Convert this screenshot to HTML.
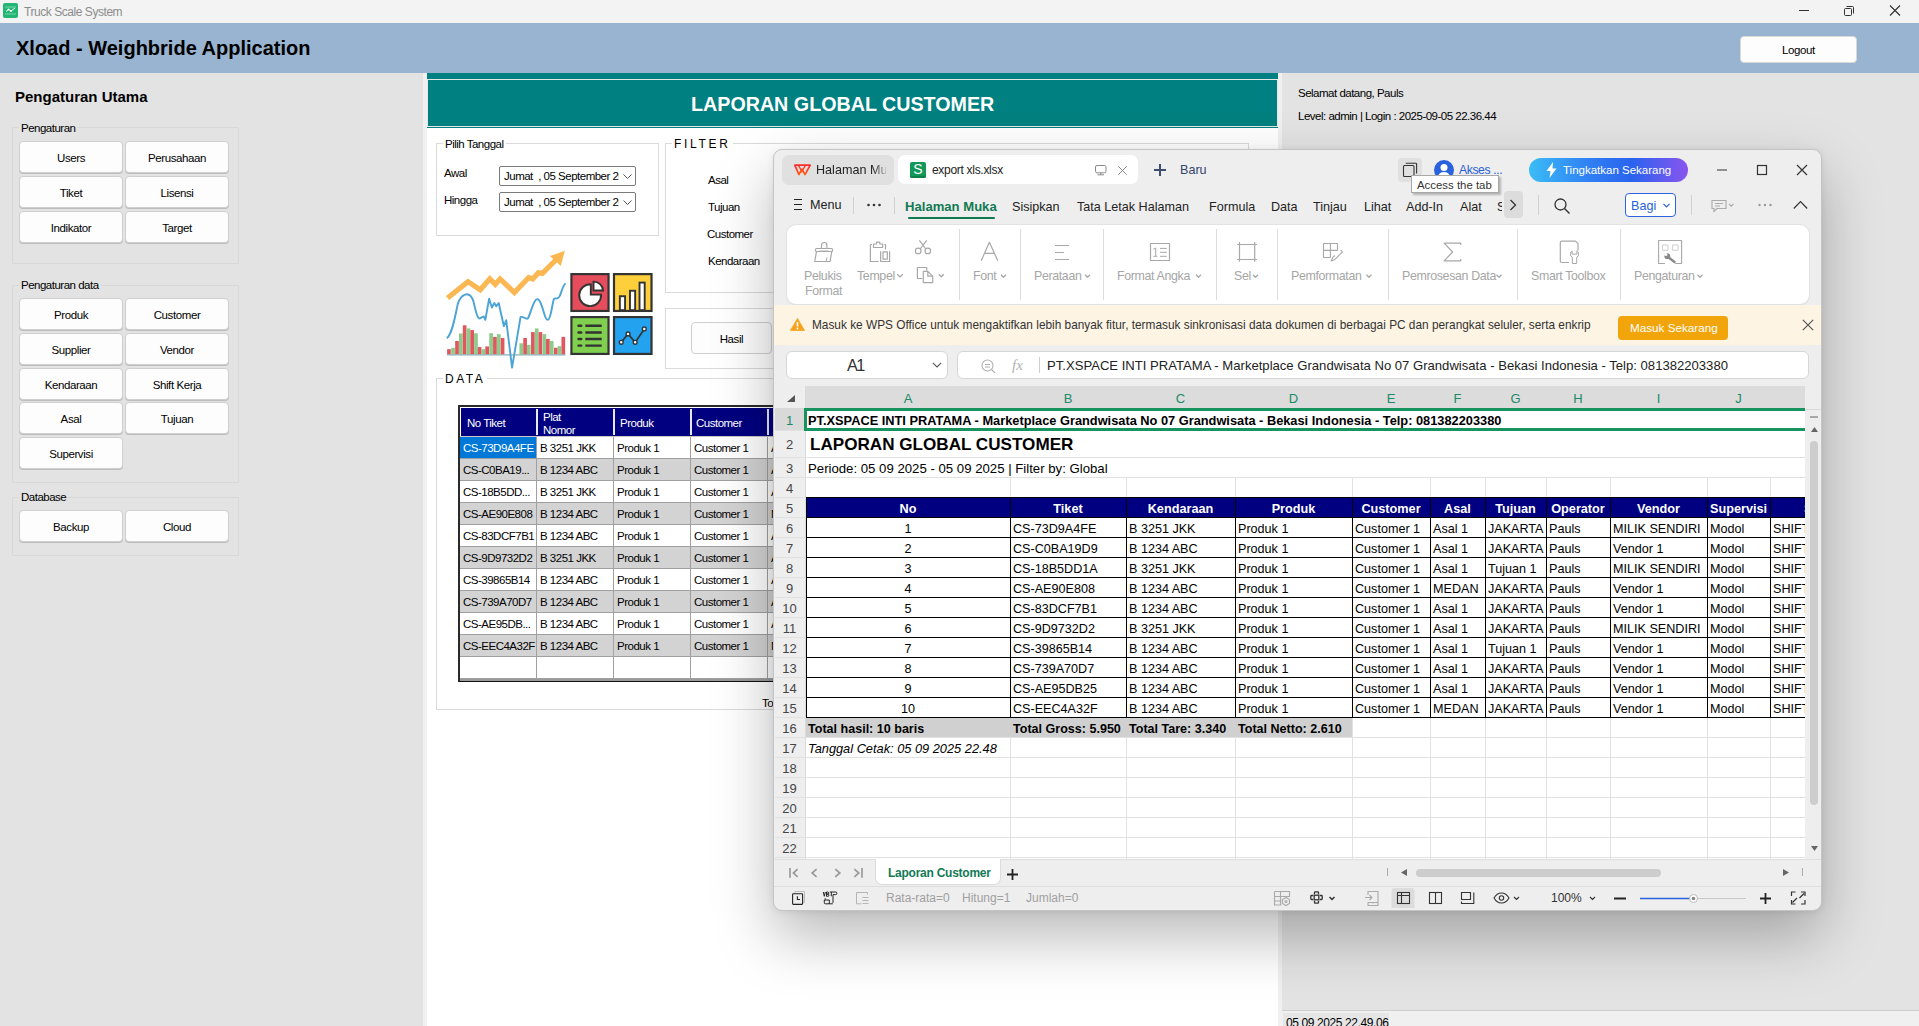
<!DOCTYPE html>
<html><head><meta charset="utf-8">
<style>
*{margin:0;padding:0;box-sizing:border-box}
html,body{width:1919px;height:1026px;overflow:hidden;background:#e3e3e3;font-family:"Liberation Sans",sans-serif;color:#000}
.a{position:absolute}
.t{position:absolute;white-space:nowrap;line-height:1}
.wf{font-size:11.5px;letter-spacing:-0.5px;margin-top:1px}
.btn{position:absolute;background:#fdfdfd;border:1px solid #cfcfcf;border-radius:4px;box-shadow:0 1px 0 #bdbdbd;font-size:11.5px;letter-spacing:-0.4px;text-align:center;line-height:32px}
.grp{position:absolute;border:1px solid #d8d8d8;border-radius:1px}
.grpw{position:absolute;border:1px solid #dadada}
.rb{font-size:12.4px;color:#a6a6a6;letter-spacing:-0.35px}
.xc{font-size:12.6px}
.lbl{position:absolute;white-space:nowrap;line-height:1;font-size:11.5px;letter-spacing:-0.5px;padding:0 2px;margin-top:1px}
</style></head><body>

<!-- Title bar -->
<div class="a" style="left:0;top:0;width:1919px;height:23px;background:#f3f3f3"></div>
<svg class="a" style="left:3px;top:3px" width="15" height="15" viewBox="0 0 15 15"><rect x="0" y="0" width="15" height="15" rx="2" fill="#22b573"/><path d="M3 8.5 L5.5 6.5 L8 8 L12 5" stroke="#fff" stroke-width="1" fill="none"/><path d="M2 4h11M2 11h11" stroke="#8fe0b8" stroke-width="0.8"/><circle cx="5.5" cy="6.5" r="1" fill="#fff"/><circle cx="8" cy="8" r="1" fill="#fff"/></svg>
<div class="t" style="left:24px;top:6px;font-size:12px;letter-spacing:-0.45px;color:#8c8c8c">Truck Scale System</div>
<svg class="a" style="left:1799px;top:5px" width="105" height="14" viewBox="0 0 105 14"><path d="M0 5.5h10" stroke="#333" stroke-width="1"/><rect x="45.5" y="3.5" width="7" height="7" fill="none" stroke="#333" stroke-width="1" rx="1"/><path d="M47.5 1.5h6a1 1 0 0 1 1 1v6" fill="none" stroke="#333" stroke-width="1"/><path d="M91 0.5l10 10M101 0.5l-10 10" stroke="#333" stroke-width="1.1"/></svg>

<!-- Header -->
<div class="a" style="left:0;top:23px;width:1919px;height:50px;background:#99b4d1"></div>
<div class="t" style="left:16px;top:38px;font-size:20px;font-weight:bold">Xload - Weighbride Application</div>
<div class="btn" style="left:1740px;top:36px;width:117px;height:27px;line-height:27px;border-color:#d8d8d8;box-shadow:none">Logout</div>

<!-- Left panel -->
<div class="t" style="left:15px;top:89px;font-size:15px;font-weight:bold">Pengaturan Utama</div>
<div class="grp" style="left:12px;top:127px;width:227px;height:137px"></div>
<div class="lbl" style="left:19px;top:122px;background:#e3e3e3">Pengaturan</div>
<div class="btn" style="left:19px;top:141px;width:104px;height:32px">Users</div>
<div class="btn" style="left:125px;top:141px;width:104px;height:32px">Perusahaan</div>
<div class="btn" style="left:19px;top:176px;width:104px;height:32px">Tiket</div>
<div class="btn" style="left:125px;top:176px;width:104px;height:32px">Lisensi</div>
<div class="btn" style="left:19px;top:211px;width:104px;height:32px">Indikator</div>
<div class="btn" style="left:125px;top:211px;width:104px;height:32px">Target</div>

<div class="grp" style="left:12px;top:285px;width:227px;height:198px"></div>
<div class="lbl" style="left:19px;top:279px;background:#e3e3e3">Pengaturan data</div>
<div class="btn" style="left:19px;top:298px;width:104px;height:32px">Produk</div>
<div class="btn" style="left:125px;top:298px;width:104px;height:32px">Customer</div>
<div class="btn" style="left:19px;top:333px;width:104px;height:32px">Supplier</div>
<div class="btn" style="left:125px;top:333px;width:104px;height:32px">Vendor</div>
<div class="btn" style="left:19px;top:368px;width:104px;height:32px">Kendaraan</div>
<div class="btn" style="left:125px;top:368px;width:104px;height:32px">Shift Kerja</div>
<div class="btn" style="left:19px;top:402px;width:104px;height:32px">Asal</div>
<div class="btn" style="left:125px;top:402px;width:104px;height:32px">Tujuan</div>
<div class="btn" style="left:19px;top:437px;width:104px;height:32px">Supervisi</div>

<div class="grp" style="left:12px;top:497px;width:227px;height:59px"></div>
<div class="lbl" style="left:19px;top:491px;background:#e3e3e3">Database</div>
<div class="btn" style="left:19px;top:510px;width:104px;height:32px">Backup</div>
<div class="btn" style="left:125px;top:510px;width:104px;height:32px">Cloud</div>

<div class="a" style="left:423px;top:73px;width:4px;height:953px;background:#f0f0f0"></div>

<!-- Middle panel -->
<div class="a" style="left:427px;top:73px;width:851px;height:953px;background:#fff"></div>
<div class="a" style="left:427px;top:73px;width:851px;height:55px;background:#008080"></div>
<div class="a" style="left:427px;top:79px;width:851px;height:48px;border:1px solid #e6e6e6;border-right-color:#e6e6e6;background:#008080"></div>
<div class="t" style="left:691px;top:95px;font-size:19.7px;font-weight:bold;color:#fff">LAPORAN GLOBAL CUSTOMER</div>


<!-- Pilih tanggal -->
<div class="grpw" style="left:436px;top:143px;width:223px;height:93px"></div>
<div class="lbl" style="left:443px;top:138px;background:#fff">Pilih Tanggal</div>
<div class="t wf" style="left:444px;top:167px">Awal</div>
<div class="t wf" style="left:444px;top:194px">Hingga</div>
<div class="a" style="left:499px;top:166px;width:137px;height:20px;border:1px solid #7a7a7a;border-radius:2px;background:#fff;overflow:hidden"><div class="t wf" style="left:4px;top:3px;width:115px;overflow:hidden">Jumat&nbsp; , 05 September 2025</div><svg class="a" style="left:123px;top:7px" width="9" height="5" viewBox="0 0 9 5"><path d="M0.5 0.5L4.5 4.5L8.5 0.5" fill="none" stroke="#555" stroke-width="1"/></svg></div>
<div class="a" style="left:499px;top:192px;width:137px;height:20px;border:1px solid #7a7a7a;border-radius:2px;background:#fff;overflow:hidden"><div class="t wf" style="left:4px;top:3px;width:115px;overflow:hidden">Jumat&nbsp; , 05 September 2025</div><svg class="a" style="left:123px;top:7px" width="9" height="5" viewBox="0 0 9 5"><path d="M0.5 0.5L4.5 4.5L8.5 0.5" fill="none" stroke="#555" stroke-width="1"/></svg></div>

<!-- Filter -->
<div class="grpw" style="left:665px;top:143px;width:584px;height:150px"></div>
<div class="lbl" style="left:672px;top:136.5px;background:#fff;font-size:12px;letter-spacing:2.7px">FILTER</div>
<div class="t wf" style="left:708px;top:174px">Asal</div>
<div class="t wf" style="left:708px;top:201px">Tujuan</div>
<div class="t wf" style="left:707px;top:228px">Customer</div>
<div class="t wf" style="left:708px;top:255px">Kendaraan</div>

<div class="grpw" style="left:665px;top:308px;width:584px;height:61px"></div>
<div class="btn" style="left:691px;top:322px;width:81px;height:32px;border-color:#d0d0d0;box-shadow:none">Hasil</div>

<!-- chart illustration -->
<svg class="a" style="left:440px;top:240px" width="220" height="140" viewBox="0 0 1612 1026">
<g stroke="none">
<rect x="52" y="800" width="27" height="40" fill="#e2575f"/>
<rect x="82" y="790" width="27" height="50" fill="#8ccb8a"/>
<rect x="111" y="740" width="27" height="100" fill="#e2575f"/>
<rect x="139" y="685" width="27" height="155" fill="#8ccb8a"/>
<rect x="167" y="625" width="27" height="215" fill="#e2575f"/>
<rect x="195" y="648" width="27" height="192" fill="#8ccb8a"/>
<rect x="222" y="660" width="27" height="180" fill="#e2575f"/>
<rect x="250" y="683" width="27" height="157" fill="#8ccb8a"/>
<rect x="277" y="785" width="27" height="55" fill="#e2575f"/>
<rect x="305" y="800" width="27" height="40" fill="#8ccb8a"/>
<rect x="332" y="780" width="27" height="60" fill="#e2575f"/>
<rect x="361" y="683" width="27" height="157" fill="#8ccb8a"/>
<rect x="389" y="710" width="27" height="130" fill="#e2575f"/>
<rect x="417" y="690" width="27" height="150" fill="#8ccb8a"/>
<rect x="445" y="718" width="27" height="122" fill="#e2575f"/>
<rect x="582" y="757" width="27" height="83" fill="#8ccb8a"/>
<rect x="610" y="718" width="27" height="122" fill="#e2575f"/>
<rect x="637" y="768" width="27" height="72" fill="#8ccb8a"/>
<rect x="667" y="675" width="27" height="165" fill="#e2575f"/>
<rect x="695" y="648" width="27" height="192" fill="#8ccb8a"/>
<rect x="722" y="675" width="27" height="165" fill="#e2575f"/>
<rect x="751" y="690" width="27" height="150" fill="#8ccb8a"/>
<rect x="777" y="725" width="27" height="115" fill="#e2575f"/>
<rect x="805" y="740" width="27" height="100" fill="#8ccb8a"/>
<rect x="835" y="790" width="27" height="50" fill="#e2575f"/>
<rect x="862" y="778" width="27" height="62" fill="#8ccb8a"/>
<rect x="890" y="710" width="27" height="130" fill="#e2575f"/>
</g>
<path d="M50 842H920" stroke="#8eafb9" stroke-width="9"/>
<path d="M50 720 C90 690 110 560 130 470 C150 400 215 360 245 450 C270 560 280 590 300 570 L320 560 L332 585 L360 430 L380 495 L398 462 L412 485 L430 462 L468 632 L485 588 L528 935 L590 565 C610 555 625 585 645 575 C670 520 690 420 720 435 C750 450 765 590 790 585 C815 580 820 470 835 432 C845 420 860 440 875 415 C890 390 895 340 920 318" fill="none" stroke="#4ba3d6" stroke-width="14" stroke-linejoin="round"/>
<path d="M55 425 L205 305 L295 365 L365 285 L405 325 L440 285 L545 385 L650 275 L680 285 L720 240 L750 245 L865 130" fill="none" stroke="#fbb752" stroke-width="38" stroke-linejoin="miter"/>
<path d="M915 78 L805 118 L885 190 Z" fill="#fbb752"/>
<g stroke="#333" stroke-width="16">
<rect x="963" y="250" width="272" height="270" fill="#e54c5c"/>
<rect x="1275" y="250" width="275" height="270" fill="#fdd03b"/>
<rect x="963" y="565" width="272" height="270" fill="#80cf4f"/>
<rect x="1275" y="565" width="275" height="270" fill="#23a2ef"/>
</g>
<g fill="none" stroke="#333" stroke-width="14">
<path d="M1105 325 A80 80 0 1 0 1180 400 L1105 400 Z" fill="#fff"/>
<path d="M1125 305 A70 70 0 0 1 1195 370 L1125 370 Z" fill="#fff"/>
<rect x="1318" y="412" width="38" height="102" fill="#fff"/>
<rect x="1392" y="372" width="38" height="142" fill="#fff"/>
<rect x="1462" y="312" width="38" height="202" fill="#fff"/>
<path d="M1065 628H1185M1065 678H1185M1065 726H1185M1065 774H1185" stroke-width="18"/>
<path d="M1015 628H1035M1015 678H1035M1015 726H1035M1015 774H1035" stroke-width="18" stroke-linecap="round"/>
<path d="M1328 750 L1378 688 L1430 750 L1497 652" stroke-width="12"/>
<circle cx="1328" cy="750" r="14" fill="#fff" stroke-width="10"/>
<circle cx="1378" cy="688" r="14" fill="#fff" stroke-width="10"/>
<circle cx="1430" cy="750" r="14" fill="#fff" stroke-width="10"/>
<circle cx="1497" cy="652" r="14" fill="#fff" stroke-width="10"/>
</g>
</svg>

<!-- DATA -->
<div class="grpw" style="left:436px;top:378px;width:830px;height:332px"></div>
<div class="lbl" style="left:443px;top:371.5px;background:#fff;font-size:12px;letter-spacing:2.5px">DATA</div>
<div class="t wf" style="left:762px;top:697px">To</div>
<!-- DataGridView -->
<div class="a" style="left:458px;top:405px;width:330px;height:277px;background:#fff;border-left:2px solid #2a2a2a;border-top:2px solid #2a2a2a;border-bottom:1px solid #111;overflow:hidden">
<div class="a" style="left:1px;top:1px;width:330px;height:28px;background:#000080"></div>
<div class="a" style="left:0;top:29px;width:330px;height:1px;background:#c8c8c8"></div>
<div class="a" style="left:76px;top:2px;width:2px;height:26px;background:#e8e8f0"></div>
<div class="a" style="left:153px;top:2px;width:2px;height:26px;background:#e8e8f0"></div>
<div class="a" style="left:230px;top:2px;width:2px;height:26px;background:#e8e8f0"></div>
<div class="a" style="left:307px;top:2px;width:2px;height:26px;background:#e8e8f0"></div>
<div class="t wf" style="left:7px;top:10px;color:#fff">No Tiket</div>
<div class="t wf" style="left:83px;top:4px;color:#fff">Plat</div>
<div class="t wf" style="left:83px;top:17px;color:#fff">Nomor</div>
<div class="t wf" style="left:160px;top:10px;color:#fff">Produk</div>
<div class="t wf" style="left:236px;top:10px;color:#fff">Customer</div>
<div class="a" style="left:0;top:30px;width:330px;height:22px;background:#fff;border-bottom:1px solid #a0a0a0"></div>
<div class="a" style="left:0;top:30px;width:76px;height:21px;background:#0078d7"></div>
<div class="t wf" style="left:3px;top:35px;color:#fff">CS-73D9A4FE</div>
<div class="t wf" style="left:80px;top:35px;color:#000">B 3251 JKK</div>
<div class="t wf" style="left:157px;top:35px;color:#000">Produk 1</div>
<div class="t wf" style="left:234px;top:35px;color:#000">Customer 1</div>
<div class="t wf" style="left:311px;top:35px;color:#000">A</div>
<div class="a" style="left:0;top:52px;width:330px;height:22px;background:#d3d3d3;border-bottom:1px solid #a0a0a0"></div>
<div class="t wf" style="left:3px;top:57px;color:#000">CS-C0BA19...</div>
<div class="t wf" style="left:80px;top:57px;color:#000">B 1234 ABC</div>
<div class="t wf" style="left:157px;top:57px;color:#000">Produk 1</div>
<div class="t wf" style="left:234px;top:57px;color:#000">Customer 1</div>
<div class="t wf" style="left:311px;top:57px;color:#000">A</div>
<div class="a" style="left:0;top:74px;width:330px;height:22px;background:#fff;border-bottom:1px solid #a0a0a0"></div>
<div class="t wf" style="left:3px;top:79px;color:#000">CS-18B5DD...</div>
<div class="t wf" style="left:80px;top:79px;color:#000">B 3251 JKK</div>
<div class="t wf" style="left:157px;top:79px;color:#000">Produk 1</div>
<div class="t wf" style="left:234px;top:79px;color:#000">Customer 1</div>
<div class="t wf" style="left:311px;top:79px;color:#000">A</div>
<div class="a" style="left:0;top:96px;width:330px;height:22px;background:#d3d3d3;border-bottom:1px solid #a0a0a0"></div>
<div class="t wf" style="left:3px;top:101px;color:#000">CS-AE90E808</div>
<div class="t wf" style="left:80px;top:101px;color:#000">B 1234 ABC</div>
<div class="t wf" style="left:157px;top:101px;color:#000">Produk 1</div>
<div class="t wf" style="left:234px;top:101px;color:#000">Customer 1</div>
<div class="t wf" style="left:311px;top:101px;color:#000">M</div>
<div class="a" style="left:0;top:118px;width:330px;height:22px;background:#fff;border-bottom:1px solid #a0a0a0"></div>
<div class="t wf" style="left:3px;top:123px;color:#000">CS-83DCF7B1</div>
<div class="t wf" style="left:80px;top:123px;color:#000">B 1234 ABC</div>
<div class="t wf" style="left:157px;top:123px;color:#000">Produk 1</div>
<div class="t wf" style="left:234px;top:123px;color:#000">Customer 1</div>
<div class="t wf" style="left:311px;top:123px;color:#000">A</div>
<div class="a" style="left:0;top:140px;width:330px;height:22px;background:#d3d3d3;border-bottom:1px solid #a0a0a0"></div>
<div class="t wf" style="left:3px;top:145px;color:#000">CS-9D9732D2</div>
<div class="t wf" style="left:80px;top:145px;color:#000">B 3251 JKK</div>
<div class="t wf" style="left:157px;top:145px;color:#000">Produk 1</div>
<div class="t wf" style="left:234px;top:145px;color:#000">Customer 1</div>
<div class="t wf" style="left:311px;top:145px;color:#000">A</div>
<div class="a" style="left:0;top:162px;width:330px;height:22px;background:#fff;border-bottom:1px solid #a0a0a0"></div>
<div class="t wf" style="left:3px;top:167px;color:#000">CS-39865B14</div>
<div class="t wf" style="left:80px;top:167px;color:#000">B 1234 ABC</div>
<div class="t wf" style="left:157px;top:167px;color:#000">Produk 1</div>
<div class="t wf" style="left:234px;top:167px;color:#000">Customer 1</div>
<div class="t wf" style="left:311px;top:167px;color:#000">A</div>
<div class="a" style="left:0;top:184px;width:330px;height:22px;background:#d3d3d3;border-bottom:1px solid #a0a0a0"></div>
<div class="t wf" style="left:3px;top:189px;color:#000">CS-739A70D7</div>
<div class="t wf" style="left:80px;top:189px;color:#000">B 1234 ABC</div>
<div class="t wf" style="left:157px;top:189px;color:#000">Produk 1</div>
<div class="t wf" style="left:234px;top:189px;color:#000">Customer 1</div>
<div class="t wf" style="left:311px;top:189px;color:#000">A</div>
<div class="a" style="left:0;top:206px;width:330px;height:22px;background:#fff;border-bottom:1px solid #a0a0a0"></div>
<div class="t wf" style="left:3px;top:211px;color:#000">CS-AE95DB...</div>
<div class="t wf" style="left:80px;top:211px;color:#000">B 1234 ABC</div>
<div class="t wf" style="left:157px;top:211px;color:#000">Produk 1</div>
<div class="t wf" style="left:234px;top:211px;color:#000">Customer 1</div>
<div class="t wf" style="left:311px;top:211px;color:#000">A</div>
<div class="a" style="left:0;top:228px;width:330px;height:22px;background:#d3d3d3;border-bottom:1px solid #a0a0a0"></div>
<div class="t wf" style="left:3px;top:233px;color:#000">CS-EEC4A32F</div>
<div class="t wf" style="left:80px;top:233px;color:#000">B 1234 ABC</div>
<div class="t wf" style="left:157px;top:233px;color:#000">Produk 1</div>
<div class="t wf" style="left:234px;top:233px;color:#000">Customer 1</div>
<div class="t wf" style="left:311px;top:233px;color:#000">M</div>
<div class="a" style="left:0;top:250px;width:330px;height:22px;background:#fff;border-bottom:1px solid #a0a0a0"></div>
<div class="a" style="left:0;top:272px;width:330px;height:2px;background:#9a9a9a"></div>
<div class="a" style="left:76px;top:30px;width:1px;height:241px;background:#a0a0a0"></div>
<div class="a" style="left:153px;top:30px;width:1px;height:241px;background:#a0a0a0"></div>
<div class="a" style="left:230px;top:30px;width:1px;height:241px;background:#a0a0a0"></div>
<div class="a" style="left:307px;top:30px;width:1px;height:241px;background:#a0a0a0"></div>
</div>

<div class="a" style="left:1278px;top:73px;width:4px;height:953px;background:#f0f0f0"></div>

<!-- Right panel -->
<div class="t wf" style="left:1298px;top:87px">Selamat datang, Pauls</div>
<div class="t wf" style="left:1298px;top:110px">Level: admin | Login : 2025-09-05 22.36.44</div>
<div class="a" style="left:1282px;top:1010px;width:637px;height:16px;background:#f0f0f0;border-top:1px solid #cfcfcf"></div>
<div class="a" style="left:1283px;top:1013px;width:106px;height:13px;background:#e6e6e6"></div>
<div class="t" style="left:1286px;top:1017px;font-size:12px;letter-spacing:-0.4px">05 09 2025 22.49.06</div>


<!-- ============ WPS WINDOW ============ -->
<div id="wps" class="a" style="left:773px;top:149px;width:1049px;height:762px;background:#eeeeee;border:1px solid #c4c4c4;border-radius:9px;box-shadow:0 26px 60px rgba(0,0,0,0.28),0 1px 7px rgba(0,0,0,0.08);overflow:hidden">
<div class="a" style="left:-774px;top:-150px;width:1919px;height:1026px">
<!-- inner coordinates = page coordinates -->

<!-- tabs -->
<div class="a" style="left:782px;top:155px;width:112px;height:30px;background:#e0e0e0;border-radius:7px"></div>
<svg class="a" style="left:793px;top:163px" width="18" height="13" viewBox="793 163 18 13"><defs><linearGradient id="wg" x1="0" y1="0" x2="0" y2="1"><stop offset="0" stop-color="#ff2a2a"/><stop offset="1" stop-color="#ff5a10"/></linearGradient></defs><path d="M794.8 165.2H810.2L805 174.6 801.9 169.2 798.9 174.6Z" fill="none" stroke="url(#wg)" stroke-width="1.7" stroke-linejoin="round"/><path d="M798.5 165.5L801.9 171.5 805.3 165.5" fill="none" stroke="url(#wg)" stroke-width="1.4"/></svg>
<div class="t" style="left:816px;top:164px;font-size:12.6px;color:#222;-webkit-mask-image:linear-gradient(90deg,#000 80%,rgba(0,0,0,0.25));width:70px;overflow:hidden">Halaman Muka</div>

<div class="a" style="left:898px;top:155px;width:240px;height:29px;background:#fff;border-radius:7px"></div>
<div class="a" style="left:910px;top:162px;width:16px;height:16px;background:#13985a;border-radius:2px;color:#fff;font-size:14px;line-height:15px;text-align:center;box-shadow:inset 0 -2px 0 #0e8049">S</div>
<div class="t" style="left:932px;top:164px;font-size:12px;letter-spacing:-0.3px;color:#222">export xls.xlsx</div>
<svg class="a" style="left:1095px;top:165px" width="12" height="11" viewBox="0 0 12 11"><rect x="0.5" y="0.5" width="10.5" height="7.3" rx="1.5" fill="none" stroke="#8a8a8a" stroke-width="1"/><path d="M2.5 9.8h6.5M5.75 8v1.8" stroke="#8a8a8a" stroke-width="1"/></svg>
<svg class="a" style="left:1117.5px;top:165.5px" width="9" height="9" viewBox="0 0 9 9"><path d="M0.3 0.3l8.4 8.4M8.7 0.3l-8.4 8.4" stroke="#8a8a8a" stroke-width="1"/></svg>
<svg class="a" style="left:1154px;top:164px" width="12" height="12" viewBox="0 0 12 12"><path d="M6 0v12M0 6h12" stroke="#3d4b6e" stroke-width="2"/></svg>
<div class="t" style="left:1180px;top:164px;font-size:12.6px;color:#34436a">Baru</div>

<div class="a" style="left:1398px;top:158px;width:24px;height:24px;background:#e0e0e0;border-radius:4px"></div>
<svg class="a" style="left:1402px;top:162px" width="16" height="16" viewBox="0 0 16 16"><rect x="1.5" y="3.5" width="10.5" height="11" rx="1" fill="none" stroke="#333" stroke-width="1.1"/><path d="M3.8 1.2h10a0.8 0.8 0 0 1 0.8 0.8v9.5" fill="none" stroke="#333" stroke-width="1.1"/></svg>
<svg class="a" style="left:1434px;top:160px" width="20" height="20" viewBox="0 0 20 20"><circle cx="10" cy="10" r="10" fill="#2a62de"/><circle cx="10" cy="7.5" r="3.5" fill="#fff"/><path d="M3.8 16.5c1-3.2 3.4-4.6 6.2-4.6s5.2 1.4 6.2 4.6" fill="#fff"/></svg>
<div class="t" style="left:1459px;top:164px;font-size:12.2px;letter-spacing:-0.4px;color:#2a5fd6">Akses ...</div>

<div class="a" style="left:1529px;top:158px;width:159px;height:24px;border-radius:12px;background:linear-gradient(90deg,#3bbcf7 0%,#2f7df3 40%,#2a63ee 65%,#8a55ef 100%)"></div>
<svg class="a" style="left:1546px;top:162px" width="11" height="16" viewBox="0 0 11 16"><path d="M7 0L0.5 9h4L3.5 16 10.5 6.5h-4Z" fill="#fff"/></svg>
<div class="t" style="left:1563px;top:165px;font-size:11.5px;color:#fff">Tingkatkan Sekarang</div>

<svg class="a" style="left:1716px;top:164px" width="92" height="12" viewBox="0 0 92 12"><path d="M1 6h10" stroke="#333" stroke-width="1.2"/><rect x="41.5" y="1.5" width="9" height="9" fill="none" stroke="#333" stroke-width="1.2"/><path d="M81 1l10 10M91 1l-10 10" stroke="#333" stroke-width="1.2"/></svg>

<!-- menu row -->
<svg class="a" style="left:794px;top:199px" width="9" height="12" viewBox="0 0 9 12"><path d="M0 0.5h8M0 5.5h8M0 10.5h8" stroke="#222" stroke-width="1"/></svg>
<div class="t" style="left:810px;top:199px;font-size:12.6px;color:#222">Menu</div>
<div class="a" style="left:853px;top:197px;width:1px;height:17px;background:#d0d0d0"></div>
<svg class="a" style="left:867px;top:203px" width="14" height="4" viewBox="0 0 14 4"><circle cx="1.5" cy="2" r="1.3" fill="#333"/><circle cx="7" cy="2" r="1.3" fill="#333"/><circle cx="12.5" cy="2" r="1.3" fill="#333"/></svg>
<div class="a" style="left:894px;top:197px;width:1px;height:17px;background:#d0d0d0"></div>
<div class="t" style="left:905px;top:200px;font-size:13.1px;font-weight:bold;color:#117a52">Halaman Muka</div>
<div class="a" style="left:908px;top:217px;width:87px;height:2px;background:#117a52;border-radius:1px"></div>
<div class="t" style="left:1012px;top:201px;font-size:12.6px;color:#222">Sisipkan</div>
<div class="t" style="left:1077px;top:201px;font-size:12.6px;color:#222">Tata Letak Halaman</div>
<div class="t" style="left:1209px;top:201px;font-size:12.6px;color:#222">Formula</div>
<div class="t" style="left:1271px;top:201px;font-size:12.6px;color:#222">Data</div>
<div class="t" style="left:1313px;top:201px;font-size:12.6px;color:#222">Tinjau</div>
<div class="t" style="left:1364px;top:201px;font-size:12.6px;color:#222">Lihat</div>
<div class="t" style="left:1406px;top:201px;font-size:12.6px;color:#222">Add-In</div>
<div class="t" style="left:1460px;top:201px;font-size:12.6px;color:#222">Alat</div>
<div class="t" style="left:1497px;top:201px;font-size:12.6px;color:#222;width:5px;overflow:hidden">S</div>
<div class="a" style="left:1504px;top:191px;width:19px;height:27px;background:#dcdcdc;border-radius:4px"></div>
<svg class="a" style="left:1509px;top:199px" width="8" height="12" viewBox="0 0 8 12"><path d="M1.5 1l5 5-5 5" fill="none" stroke="#333" stroke-width="1.3"/></svg>
<div class="a" style="left:1538px;top:195px;width:1px;height:20px;background:#d0d0d0"></div>
<svg class="a" style="left:1554px;top:198px" width="17" height="16" viewBox="0 0 17 16"><circle cx="6.5" cy="6.5" r="5.5" fill="none" stroke="#333" stroke-width="1.3"/><path d="M10.5 10.5l5 5" stroke="#333" stroke-width="1.4"/></svg>
<div class="a" style="left:1625px;top:193px;width:51px;height:24px;border:1px solid #2a64e0;border-radius:4px;background:#fff"></div>
<div class="t" style="left:1631px;top:200px;font-size:12.6px;color:#2a5fd6">Bagi</div>
<svg class="a" style="left:1663px;top:203px" width="7" height="5" viewBox="0 0 7 5"><path d="M0.5 0.8l3 3 3-3" fill="none" stroke="#2a5fd6" stroke-width="1.2"/></svg>
<div class="a" style="left:1691px;top:195px;width:1px;height:20px;background:#d0d0d0"></div>
<svg class="a" style="left:1711px;top:199px" width="24" height="14" viewBox="0 0 24 14"><path d="M1 1.5h14v8H6l-3 3v-3H1Z" fill="none" stroke="#aaa" stroke-width="1.1"/><path d="M4 4.5h8M4 7h5" stroke="#aaa" stroke-width="1"/><path d="M18 5l2.2 2.2L22.4 5" fill="none" stroke="#aaa" stroke-width="1.1"/></svg>
<svg class="a" style="left:1758px;top:203px" width="14" height="4" viewBox="0 0 14 4"><circle cx="1.5" cy="2" r="1.2" fill="#999"/><circle cx="7" cy="2" r="1.2" fill="#999"/><circle cx="12.5" cy="2" r="1.2" fill="#999"/></svg>
<svg class="a" style="left:1793px;top:200px" width="15" height="10" viewBox="0 0 15 10"><path d="M0.8 8.5l6.7-7 6.7 7" fill="none" stroke="#333" stroke-width="1.2"/></svg>

<!-- tooltip -->
<div class="a" style="left:1411px;top:175px;width:88px;height:18px;background:#fff;border:1px solid #a8a8a8;box-shadow:2px 2px 2px rgba(0,0,0,0.25)"></div>
<div class="t" style="left:1417px;top:180px;font-size:11.4px;color:#333">Access the tab</div>


<!-- ribbon -->
<div class="a" style="left:787px;top:225px;width:1022px;height:79px;background:#fff;border-radius:9px;box-shadow:0 0 0 1px #e2e2e2,0 1px 2px rgba(0,0,0,0.10)"></div>
<g></g>
<svg class="a" style="left:787px;top:225px" width="1022" height="79" viewBox="787 225 1022 79" fill="none" stroke="#a8a8a8" stroke-width="1.2" stroke-linejoin="round">
 <!-- brush -->
 <path d="M821.5 248.5v-3.3a2.7 2.7 0 0 1 5.4 0v3.3"/>
 <rect x="815.5" y="248.5" width="17" height="3" rx="1"/>
 <path d="M819.5 251h9" stroke-width="0.9"/>
 <path d="M816.5 251.5l-1.8 10h15.3l1.8-10"/>
 <path d="M827 257.5l-1 4" stroke-width="1"/>
 <!-- paste -->
 <path d="M872 244.5h-1.6v17h8.3M884.3 244.5h1.2v5"/>
 <path d="M873.5 247.5v-3.5h3v-1.8h3.3v1.8h2.8v3.5Z"/>
 <path d="M880.6 251.3v10.2h9v-10.2M883 251.8v7.4h4.3v-7.4Z"/>
 <!-- scissors -->
 <circle cx="918.2" cy="250.9" r="2.8"/><circle cx="927.8" cy="250.9" r="2.8"/>
 <path d="M919.4 240.3L925.8 249M926.7 240.3L920.2 249"/>
 <!-- copy -->
 <path d="M926.7 270.8v-3.3h-9.3v11h5"/>
 <path d="M923.3 271.3h4.5l4.9 4.9v6.4h-9.4Z M927.8 271.3v4.9h4.9"/>
 <path d="M938.8 274.3l2.5 2.5 2.5-2.5" stroke-width="1.3"/>
 <path d="M897.2 274.3l2.8 2.6 2.8-2.6" stroke-width="1.3"/>
 <!-- separators -->
 <path d="M959.5 229v71M1020.5 229v71M1103.5 229v71M1216.5 229v71M1277.5 229v71M1388.5 229v71M1517.5 229v71M1620.5 229v71" stroke="#dcdcdc" stroke-width="1"/>
 <!-- A -->
 <path d="M981.2 260.7L989.4 242.3 997.8 260.7M984.6 253.3h9.8"/>
 <!-- align -->
 <path d="M1055 245.5h14M1055 252.5h9M1055 259.5h14" stroke-width="1.1"/>
 <!-- format angka -->
 <rect x="1150.5" y="243.5" width="19" height="17"/><path d="M1153.3 249.3l2.4-1.3v8.3M1153.3 256.3h4M1160 248.4h6.8M1160 252.3h6.8M1160 256.3h6.8" stroke-width="1"/>
 <!-- sel -->
 <path d="M1237.2 244.5h19.7M1237.2 259.5h19.7M1239.5 242.1v19.7M1254.7 242.1v19.7"/>
 <!-- pemformatan -->
 <path d="M1330.5 257.5h-7v-14h14v7 M1323.5 250.4h14 M1330.4 243.5v14" stroke-width="1.1"/>
 <path d="M1342.5 251.8l-7.6 7.6M1340.6 250l1.9 1.9M1334.9 259.4l-3.8 1.6 1.8-3.6 1.9-1.9" stroke-width="1.1"/>
 <!-- sigma -->
 <path d="M1460.7 245v-1.8h-16.5l8.4 8.8-8.4 8.8h16.5v-1.8"/>
 <!-- smart toolbox -->
 <path d="M1569 262.5h-7.2a1.5 1.5 0 0 1-1.5-1.5v-18.4a1.5 1.5 0 0 1 1.5-1.5h13.7l2.5 2.5v6.8"/>
 <path d="M1572.3 263.5v-6.3l-1.6-1.3v-3.8l1.4-1.2v3.2h4.8v-3.2l1.4 1.2v3.8l-1.6 1.3v6.3Z" stroke-width="1"/>
 <!-- pengaturan -->
 <path d="M1665 263.5h-6.4v-23h23v23h-6.4" stroke-width="1.1"/>
 <rect x="1662.6" y="245" width="5.4" height="5.3" stroke="#cfcfcf" stroke-width="1"/><rect x="1672.6" y="245" width="5.4" height="5.3" stroke="#cfcfcf" stroke-width="1"/>
 <path d="M1668 257l6.5 5" stroke="#8a8a8a" stroke-width="2.4" stroke-linecap="round"/><circle cx="1667.3" cy="256.2" r="2.9" fill="#8a8a8a" stroke="none"/><circle cx="1665.9" cy="254.6" r="1.5" fill="#fff" stroke="none"/>
 <!-- chevrons -->
 <path d="M1001 274.8l2.5 2.5 2.5-2.5M1085 274.8l2.5 2.5 2.5-2.5M1196 274.8l2.5 2.5 2.5-2.5M1253 274.8l2.5 2.5 2.5-2.5M1366.5 274.8l2.5 2.5 2.5-2.5M1496.5 274.8l2.5 2.5 2.5-2.5M1697.5 274.8l2.5 2.5 2.5-2.5" stroke-width="1.3"/>
</svg>
<div class="t rb" style="left:804px;top:269.5px">Pelukis</div>
<div class="t rb" style="left:805px;top:284.5px">Format</div>
<div class="t rb" style="left:857px;top:269.5px">Tempel</div>
<div class="t rb" style="left:973px;top:269.5px">Font</div>
<div class="t rb" style="left:1034px;top:269.5px">Perataan</div>
<div class="t rb" style="left:1117px;top:269.5px">Format Angka</div>
<div class="t rb" style="left:1234px;top:269.5px">Sel</div>
<div class="t rb" style="left:1291px;top:269.5px">Pemformatan</div>
<div class="t rb" style="left:1402px;top:269.5px">Pemrosesan Data</div>
<div class="t rb" style="left:1531px;top:269.5px">Smart Toolbox</div>
<div class="t rb" style="left:1634px;top:269.5px">Pengaturan</div>

<!-- warning bar -->
<div class="a" style="left:774px;top:305px;width:1048px;height:40px;background:#fdf4e4"></div>
<svg class="a" style="left:790px;top:318px" width="15" height="13" viewBox="0 0 15 13"><path d="M7.5 0.3L14.8 12.8H0.2Z" fill="#f6a21d" stroke="#f6a21d" stroke-width="0.6" stroke-linejoin="round"/><path d="M7.5 4v4.5" stroke="#fff" stroke-width="1.6"/><circle cx="7.5" cy="10.5" r="0.9" fill="#fff"/></svg>
<div class="t" style="left:812px;top:320px;font-size:11.85px;color:#333">Masuk ke WPS Office untuk mengaktifkan lebih banyak fitur, termasuk sinkronisasi data dokumen di berbagai PC dan perangkat seluler, serta enkrip</div>
<div class="a" style="left:1618px;top:316px;width:110px;height:24px;background:#f2a50b;border-radius:4px"></div>
<div class="t" style="left:1630px;top:322px;font-size:11.7px;color:#fff">Masuk Sekarang</div>
<svg class="a" style="left:1802px;top:319px" width="12" height="12" viewBox="0 0 12 12"><path d="M0.8 0.8l10.4 10.4M11.2 0.8L0.8 11.2" stroke="#555" stroke-width="1.2"/></svg>

<!-- formula bar -->
<div class="a" style="left:786px;top:351px;width:162px;height:28px;background:#fff;border:1px solid #d6d6d6;border-radius:6px"></div>
<div class="t" style="left:847px;top:357px;font-size:16.3px;color:#333;letter-spacing:-1.6px">A1</div>
<svg class="a" style="left:932px;top:362px" width="10" height="6" viewBox="0 0 10 6"><path d="M0.8 0.8l4.2 4.2 4.2-4.2" fill="none" stroke="#555" stroke-width="1.1"/></svg>
<div class="a" style="left:957px;top:351px;width:852px;height:28px;background:#fff;border:1px solid #d6d6d6;border-radius:6px"></div>
<svg class="a" style="left:981px;top:359px" width="16" height="14" viewBox="0 0 16 14"><circle cx="6.5" cy="6.5" r="5.5" fill="none" stroke="#b0b0b0" stroke-width="1.1"/><path d="M4 5.5h5M4 8h5M10.5 10.5l3.5 3.5" stroke="#b0b0b0" stroke-width="1.1"/></svg>
<div class="t" style="left:1012px;top:358px;font-family:'Liberation Serif',serif;font-style:italic;font-size:15px;color:#b0b0b0">fx</div>
<div class="a" style="left:1039px;top:357px;width:1px;height:16px;background:#cfcfcf"></div>
<div class="t" style="left:1047px;top:359px;font-size:13.1px;color:#222">PT.XSPACE INTI PRATAMA - Marketplace Grandwisata No 07 Grandwisata - Bekasi Indonesia - Telp: 081382203380</div>

<!-- sheet -->
<div class="a" style="left:775px;top:386px;width:1030px;height:474px;background:#fff;overflow:hidden">
<div class="a" style="left:-775px;top:-386px;width:1919px;height:1026px">
<div class="a" style="left:775px;top:386px;width:31px;height:474px;background:#eeeeee"></div>
<div class="a" style="left:775px;top:408px;width:31px;height:22px;background:#d9d9d9"></div>
<div class="a" style="left:805px;top:386px;width:1px;height:474px;background:#dadada"></div>
<div class="a" style="left:806px;top:386px;width:1000px;height:22px;background:#dcdcdc"></div>
<svg class="a" style="left:787px;top:395px" width="8" height="7" viewBox="0 0 8 7"><path d="M8 0V7H0Z" fill="#555"/></svg>
<div class="t" style="left:888.0px;width:40px;text-align:center;top:392px;font-size:13px;color:#1a8a68">A</div>
<div class="t" style="left:1048.0px;width:40px;text-align:center;top:392px;font-size:13px;color:#1a8a68">B</div>
<div class="t" style="left:1160.5px;width:40px;text-align:center;top:392px;font-size:13px;color:#1a8a68">C</div>
<div class="t" style="left:1273.5px;width:40px;text-align:center;top:392px;font-size:13px;color:#1a8a68">D</div>
<div class="t" style="left:1371.0px;width:40px;text-align:center;top:392px;font-size:13px;color:#1a8a68">E</div>
<div class="t" style="left:1437.5px;width:40px;text-align:center;top:392px;font-size:13px;color:#1a8a68">F</div>
<div class="t" style="left:1495.5px;width:40px;text-align:center;top:392px;font-size:13px;color:#1a8a68">G</div>
<div class="t" style="left:1558.0px;width:40px;text-align:center;top:392px;font-size:13px;color:#1a8a68">H</div>
<div class="t" style="left:1638.5px;width:40px;text-align:center;top:392px;font-size:13px;color:#1a8a68">I</div>
<div class="t" style="left:1718.5px;width:40px;text-align:center;top:392px;font-size:13px;color:#1a8a68">J</div>
<div class="t" style="left:1805.0px;width:40px;text-align:center;top:392px;font-size:13px;color:#1a8a68">K</div>
<div class="a" style="left:1010px;top:477px;width:1px;height:383px;background:#e1e1e1"></div>
<div class="a" style="left:1126px;top:477px;width:1px;height:383px;background:#e1e1e1"></div>
<div class="a" style="left:1235px;top:477px;width:1px;height:383px;background:#e1e1e1"></div>
<div class="a" style="left:1352px;top:477px;width:1px;height:383px;background:#e1e1e1"></div>
<div class="a" style="left:1430px;top:477px;width:1px;height:383px;background:#e1e1e1"></div>
<div class="a" style="left:1485px;top:477px;width:1px;height:383px;background:#e1e1e1"></div>
<div class="a" style="left:1546px;top:477px;width:1px;height:383px;background:#e1e1e1"></div>
<div class="a" style="left:1610px;top:477px;width:1px;height:383px;background:#e1e1e1"></div>
<div class="a" style="left:1707px;top:477px;width:1px;height:383px;background:#e1e1e1"></div>
<div class="a" style="left:1770px;top:477px;width:1px;height:383px;background:#e1e1e1"></div>
<div class="a" style="left:1880px;top:477px;width:1px;height:383px;background:#e1e1e1"></div>
<div class="a" style="left:775px;top:430px;width:1030px;height:1px;background:#e1e1e1"></div>
<div class="a" style="left:775px;top:457px;width:1030px;height:1px;background:#e1e1e1"></div>
<div class="a" style="left:775px;top:477px;width:1030px;height:1px;background:#e1e1e1"></div>
<div class="a" style="left:775px;top:497px;width:1030px;height:1px;background:#e1e1e1"></div>
<div class="a" style="left:775px;top:517px;width:1030px;height:1px;background:#e1e1e1"></div>
<div class="a" style="left:775px;top:537px;width:1030px;height:1px;background:#e1e1e1"></div>
<div class="a" style="left:775px;top:557px;width:1030px;height:1px;background:#e1e1e1"></div>
<div class="a" style="left:775px;top:577px;width:1030px;height:1px;background:#e1e1e1"></div>
<div class="a" style="left:775px;top:597px;width:1030px;height:1px;background:#e1e1e1"></div>
<div class="a" style="left:775px;top:617px;width:1030px;height:1px;background:#e1e1e1"></div>
<div class="a" style="left:775px;top:637px;width:1030px;height:1px;background:#e1e1e1"></div>
<div class="a" style="left:775px;top:657px;width:1030px;height:1px;background:#e1e1e1"></div>
<div class="a" style="left:775px;top:677px;width:1030px;height:1px;background:#e1e1e1"></div>
<div class="a" style="left:775px;top:697px;width:1030px;height:1px;background:#e1e1e1"></div>
<div class="a" style="left:775px;top:717px;width:1030px;height:1px;background:#e1e1e1"></div>
<div class="a" style="left:775px;top:737px;width:1030px;height:1px;background:#e1e1e1"></div>
<div class="a" style="left:775px;top:757px;width:1030px;height:1px;background:#e1e1e1"></div>
<div class="a" style="left:775px;top:777px;width:1030px;height:1px;background:#e1e1e1"></div>
<div class="a" style="left:775px;top:797px;width:1030px;height:1px;background:#e1e1e1"></div>
<div class="a" style="left:775px;top:817px;width:1030px;height:1px;background:#e1e1e1"></div>
<div class="a" style="left:775px;top:837px;width:1030px;height:1px;background:#e1e1e1"></div>
<div class="a" style="left:775px;top:857px;width:1030px;height:1px;background:#e1e1e1"></div>
<div class="t" style="left:774px;width:31px;text-align:center;top:413.5px;font-size:13px;color:#1a8a68">1</div>
<div class="t" style="left:774px;width:31px;text-align:center;top:438.0px;font-size:13px;color:#444">2</div>
<div class="t" style="left:774px;width:31px;text-align:center;top:461.5px;font-size:13px;color:#444">3</div>
<div class="t" style="left:774px;width:31px;text-align:center;top:481.5px;font-size:13px;color:#444">4</div>
<div class="t" style="left:774px;width:31px;text-align:center;top:501.5px;font-size:13px;color:#444">5</div>
<div class="t" style="left:774px;width:31px;text-align:center;top:521.5px;font-size:13px;color:#444">6</div>
<div class="t" style="left:774px;width:31px;text-align:center;top:541.5px;font-size:13px;color:#444">7</div>
<div class="t" style="left:774px;width:31px;text-align:center;top:561.5px;font-size:13px;color:#444">8</div>
<div class="t" style="left:774px;width:31px;text-align:center;top:581.5px;font-size:13px;color:#444">9</div>
<div class="t" style="left:774px;width:31px;text-align:center;top:601.5px;font-size:13px;color:#444">10</div>
<div class="t" style="left:774px;width:31px;text-align:center;top:621.5px;font-size:13px;color:#444">11</div>
<div class="t" style="left:774px;width:31px;text-align:center;top:641.5px;font-size:13px;color:#444">12</div>
<div class="t" style="left:774px;width:31px;text-align:center;top:661.5px;font-size:13px;color:#444">13</div>
<div class="t" style="left:774px;width:31px;text-align:center;top:681.5px;font-size:13px;color:#444">14</div>
<div class="t" style="left:774px;width:31px;text-align:center;top:701.5px;font-size:13px;color:#444">15</div>
<div class="t" style="left:774px;width:31px;text-align:center;top:721.5px;font-size:13px;color:#444">16</div>
<div class="t" style="left:774px;width:31px;text-align:center;top:741.5px;font-size:13px;color:#444">17</div>
<div class="t" style="left:774px;width:31px;text-align:center;top:761.5px;font-size:13px;color:#444">18</div>
<div class="t" style="left:774px;width:31px;text-align:center;top:781.5px;font-size:13px;color:#444">19</div>
<div class="t" style="left:774px;width:31px;text-align:center;top:801.5px;font-size:13px;color:#444">20</div>
<div class="t" style="left:774px;width:31px;text-align:center;top:821.5px;font-size:13px;color:#444">21</div>
<div class="t" style="left:774px;width:31px;text-align:center;top:841.5px;font-size:13px;color:#444">22</div>
<div class="a" style="left:806px;top:717px;width:546px;height:20px;background:#d0d0d0"></div>
<div class="a" style="left:806px;top:497px;width:1000px;height:20px;background:#000080"></div>
<div class="a" style="left:806px;top:497px;width:1000px;height:1px;background:#000"></div>
<div class="a" style="left:806px;top:517px;width:1000px;height:1px;background:#000"></div>
<div class="a" style="left:806px;top:537px;width:1000px;height:1px;background:#000"></div>
<div class="a" style="left:806px;top:557px;width:1000px;height:1px;background:#000"></div>
<div class="a" style="left:806px;top:577px;width:1000px;height:1px;background:#000"></div>
<div class="a" style="left:806px;top:597px;width:1000px;height:1px;background:#000"></div>
<div class="a" style="left:806px;top:617px;width:1000px;height:1px;background:#000"></div>
<div class="a" style="left:806px;top:637px;width:1000px;height:1px;background:#000"></div>
<div class="a" style="left:806px;top:657px;width:1000px;height:1px;background:#000"></div>
<div class="a" style="left:806px;top:677px;width:1000px;height:1px;background:#000"></div>
<div class="a" style="left:806px;top:697px;width:1000px;height:1px;background:#000"></div>
<div class="a" style="left:806px;top:717px;width:1000px;height:1px;background:#000"></div>
<div class="a" style="left:806px;top:497px;width:1px;height:221px;background:#000"></div>
<div class="a" style="left:1010px;top:497px;width:1px;height:221px;background:#000"></div>
<div class="a" style="left:1126px;top:497px;width:1px;height:221px;background:#000"></div>
<div class="a" style="left:1235px;top:497px;width:1px;height:221px;background:#000"></div>
<div class="a" style="left:1352px;top:497px;width:1px;height:221px;background:#000"></div>
<div class="a" style="left:1430px;top:497px;width:1px;height:221px;background:#000"></div>
<div class="a" style="left:1485px;top:497px;width:1px;height:221px;background:#000"></div>
<div class="a" style="left:1546px;top:497px;width:1px;height:221px;background:#000"></div>
<div class="a" style="left:1610px;top:497px;width:1px;height:221px;background:#000"></div>
<div class="a" style="left:1707px;top:497px;width:1px;height:221px;background:#000"></div>
<div class="a" style="left:1770px;top:497px;width:1px;height:221px;background:#000"></div>
<div class="t xs" style="left:808px;top:415px;font-weight:bold;font-size:12.8px">PT.XSPACE INTI PRATAMA - Marketplace Grandwisata No 07 Grandwisata - Bekasi Indonesia - Telp: 081382203380</div>
<div class="t" style="left:810px;top:436px;font-weight:bold;font-size:17.1px">LAPORAN GLOBAL CUSTOMER</div>
<div class="t" style="left:808px;top:461.5px;font-size:13.2px">Periode: 05 09 2025 - 05 09 2025 | Filter by: Global</div>
<div class="t" style="left:848.0px;width:120px;text-align:center;top:502.5px;font-size:12.7px;font-weight:bold;color:#fff">No</div>
<div class="t" style="left:1008.0px;width:120px;text-align:center;top:502.5px;font-size:12.7px;font-weight:bold;color:#fff">Tiket</div>
<div class="t" style="left:1120.5px;width:120px;text-align:center;top:502.5px;font-size:12.7px;font-weight:bold;color:#fff">Kendaraan</div>
<div class="t" style="left:1233.5px;width:120px;text-align:center;top:502.5px;font-size:12.7px;font-weight:bold;color:#fff">Produk</div>
<div class="t" style="left:1331.0px;width:120px;text-align:center;top:502.5px;font-size:12.7px;font-weight:bold;color:#fff">Customer</div>
<div class="t" style="left:1397.5px;width:120px;text-align:center;top:502.5px;font-size:12.7px;font-weight:bold;color:#fff">Asal</div>
<div class="t" style="left:1455.5px;width:120px;text-align:center;top:502.5px;font-size:12.7px;font-weight:bold;color:#fff">Tujuan</div>
<div class="t" style="left:1518.0px;width:120px;text-align:center;top:502.5px;font-size:12.7px;font-weight:bold;color:#fff">Operator</div>
<div class="t" style="left:1598.5px;width:120px;text-align:center;top:502.5px;font-size:12.7px;font-weight:bold;color:#fff">Vendor</div>
<div class="t" style="left:1678.5px;width:120px;text-align:center;top:502.5px;font-size:12.7px;font-weight:bold;color:#fff">Supervisi</div>
<div class="t" style="left:1758px;width:120px;text-align:center;top:502.5px;font-size:12.7px;font-weight:bold;color:#fff">Shift</div>
<div class="t xc" style="left:806px;width:204px;text-align:center;top:522.5px">1</div>
<div class="t xc" style="left:1013px;top:522.5px">CS-73D9A4FE</div>
<div class="t xc" style="left:1129px;top:522.5px">B 3251 JKK</div>
<div class="t xc" style="left:1238px;top:522.5px">Produk 1</div>
<div class="t xc" style="left:1355px;top:522.5px">Customer 1</div>
<div class="t xc" style="left:1433px;top:522.5px">Asal 1</div>
<div class="t xc" style="left:1488px;top:522.5px">JAKARTA</div>
<div class="t xc" style="left:1549px;top:522.5px">Pauls</div>
<div class="t xc" style="left:1613px;top:522.5px">MILIK SENDIRI</div>
<div class="t xc" style="left:1710px;top:522.5px">Modol</div>
<div class="t xc" style="left:1773px;top:522.5px">SHIFT 1</div>
<div class="t xc" style="left:806px;width:204px;text-align:center;top:542.5px">2</div>
<div class="t xc" style="left:1013px;top:542.5px">CS-C0BA19D9</div>
<div class="t xc" style="left:1129px;top:542.5px">B 1234 ABC</div>
<div class="t xc" style="left:1238px;top:542.5px">Produk 1</div>
<div class="t xc" style="left:1355px;top:542.5px">Customer 1</div>
<div class="t xc" style="left:1433px;top:542.5px">Asal 1</div>
<div class="t xc" style="left:1488px;top:542.5px">JAKARTA</div>
<div class="t xc" style="left:1549px;top:542.5px">Pauls</div>
<div class="t xc" style="left:1613px;top:542.5px">Vendor 1</div>
<div class="t xc" style="left:1710px;top:542.5px">Modol</div>
<div class="t xc" style="left:1773px;top:542.5px">SHIFT 1</div>
<div class="t xc" style="left:806px;width:204px;text-align:center;top:562.5px">3</div>
<div class="t xc" style="left:1013px;top:562.5px">CS-18B5DD1A</div>
<div class="t xc" style="left:1129px;top:562.5px">B 3251 JKK</div>
<div class="t xc" style="left:1238px;top:562.5px">Produk 1</div>
<div class="t xc" style="left:1355px;top:562.5px">Customer 1</div>
<div class="t xc" style="left:1433px;top:562.5px">Asal 1</div>
<div class="t xc" style="left:1488px;top:562.5px">Tujuan 1</div>
<div class="t xc" style="left:1549px;top:562.5px">Pauls</div>
<div class="t xc" style="left:1613px;top:562.5px">MILIK SENDIRI</div>
<div class="t xc" style="left:1710px;top:562.5px">Modol</div>
<div class="t xc" style="left:1773px;top:562.5px">SHIFT 1</div>
<div class="t xc" style="left:806px;width:204px;text-align:center;top:582.5px">4</div>
<div class="t xc" style="left:1013px;top:582.5px">CS-AE90E808</div>
<div class="t xc" style="left:1129px;top:582.5px">B 1234 ABC</div>
<div class="t xc" style="left:1238px;top:582.5px">Produk 1</div>
<div class="t xc" style="left:1355px;top:582.5px">Customer 1</div>
<div class="t xc" style="left:1433px;top:582.5px">MEDAN</div>
<div class="t xc" style="left:1488px;top:582.5px">JAKARTA</div>
<div class="t xc" style="left:1549px;top:582.5px">Pauls</div>
<div class="t xc" style="left:1613px;top:582.5px">Vendor 1</div>
<div class="t xc" style="left:1710px;top:582.5px">Modol</div>
<div class="t xc" style="left:1773px;top:582.5px">SHIFT 1</div>
<div class="t xc" style="left:806px;width:204px;text-align:center;top:602.5px">5</div>
<div class="t xc" style="left:1013px;top:602.5px">CS-83DCF7B1</div>
<div class="t xc" style="left:1129px;top:602.5px">B 1234 ABC</div>
<div class="t xc" style="left:1238px;top:602.5px">Produk 1</div>
<div class="t xc" style="left:1355px;top:602.5px">Customer 1</div>
<div class="t xc" style="left:1433px;top:602.5px">Asal 1</div>
<div class="t xc" style="left:1488px;top:602.5px">JAKARTA</div>
<div class="t xc" style="left:1549px;top:602.5px">Pauls</div>
<div class="t xc" style="left:1613px;top:602.5px">Vendor 1</div>
<div class="t xc" style="left:1710px;top:602.5px">Modol</div>
<div class="t xc" style="left:1773px;top:602.5px">SHIFT 1</div>
<div class="t xc" style="left:806px;width:204px;text-align:center;top:622.5px">6</div>
<div class="t xc" style="left:1013px;top:622.5px">CS-9D9732D2</div>
<div class="t xc" style="left:1129px;top:622.5px">B 3251 JKK</div>
<div class="t xc" style="left:1238px;top:622.5px">Produk 1</div>
<div class="t xc" style="left:1355px;top:622.5px">Customer 1</div>
<div class="t xc" style="left:1433px;top:622.5px">Asal 1</div>
<div class="t xc" style="left:1488px;top:622.5px">JAKARTA</div>
<div class="t xc" style="left:1549px;top:622.5px">Pauls</div>
<div class="t xc" style="left:1613px;top:622.5px">MILIK SENDIRI</div>
<div class="t xc" style="left:1710px;top:622.5px">Modol</div>
<div class="t xc" style="left:1773px;top:622.5px">SHIFT 1</div>
<div class="t xc" style="left:806px;width:204px;text-align:center;top:642.5px">7</div>
<div class="t xc" style="left:1013px;top:642.5px">CS-39865B14</div>
<div class="t xc" style="left:1129px;top:642.5px">B 1234 ABC</div>
<div class="t xc" style="left:1238px;top:642.5px">Produk 1</div>
<div class="t xc" style="left:1355px;top:642.5px">Customer 1</div>
<div class="t xc" style="left:1433px;top:642.5px">Asal 1</div>
<div class="t xc" style="left:1488px;top:642.5px">Tujuan 1</div>
<div class="t xc" style="left:1549px;top:642.5px">Pauls</div>
<div class="t xc" style="left:1613px;top:642.5px">Vendor 1</div>
<div class="t xc" style="left:1710px;top:642.5px">Modol</div>
<div class="t xc" style="left:1773px;top:642.5px">SHIFT 1</div>
<div class="t xc" style="left:806px;width:204px;text-align:center;top:662.5px">8</div>
<div class="t xc" style="left:1013px;top:662.5px">CS-739A70D7</div>
<div class="t xc" style="left:1129px;top:662.5px">B 1234 ABC</div>
<div class="t xc" style="left:1238px;top:662.5px">Produk 1</div>
<div class="t xc" style="left:1355px;top:662.5px">Customer 1</div>
<div class="t xc" style="left:1433px;top:662.5px">Asal 1</div>
<div class="t xc" style="left:1488px;top:662.5px">JAKARTA</div>
<div class="t xc" style="left:1549px;top:662.5px">Pauls</div>
<div class="t xc" style="left:1613px;top:662.5px">Vendor 1</div>
<div class="t xc" style="left:1710px;top:662.5px">Modol</div>
<div class="t xc" style="left:1773px;top:662.5px">SHIFT 1</div>
<div class="t xc" style="left:806px;width:204px;text-align:center;top:682.5px">9</div>
<div class="t xc" style="left:1013px;top:682.5px">CS-AE95DB25</div>
<div class="t xc" style="left:1129px;top:682.5px">B 1234 ABC</div>
<div class="t xc" style="left:1238px;top:682.5px">Produk 1</div>
<div class="t xc" style="left:1355px;top:682.5px">Customer 1</div>
<div class="t xc" style="left:1433px;top:682.5px">Asal 1</div>
<div class="t xc" style="left:1488px;top:682.5px">JAKARTA</div>
<div class="t xc" style="left:1549px;top:682.5px">Pauls</div>
<div class="t xc" style="left:1613px;top:682.5px">Vendor 1</div>
<div class="t xc" style="left:1710px;top:682.5px">Modol</div>
<div class="t xc" style="left:1773px;top:682.5px">SHIFT 1</div>
<div class="t xc" style="left:806px;width:204px;text-align:center;top:702.5px">10</div>
<div class="t xc" style="left:1013px;top:702.5px">CS-EEC4A32F</div>
<div class="t xc" style="left:1129px;top:702.5px">B 1234 ABC</div>
<div class="t xc" style="left:1238px;top:702.5px">Produk 1</div>
<div class="t xc" style="left:1355px;top:702.5px">Customer 1</div>
<div class="t xc" style="left:1433px;top:702.5px">MEDAN</div>
<div class="t xc" style="left:1488px;top:702.5px">JAKARTA</div>
<div class="t xc" style="left:1549px;top:702.5px">Pauls</div>
<div class="t xc" style="left:1613px;top:702.5px">Vendor 1</div>
<div class="t xc" style="left:1710px;top:702.5px">Modol</div>
<div class="t xc" style="left:1773px;top:702.5px">SHIFT 1</div>
<div class="t xc" style="left:808px;top:722.5px;font-weight:bold;font-size:12.55px">Total hasil: 10 baris</div>
<div class="t xc" style="left:1013px;top:722.5px;font-weight:bold;font-size:12.55px">Total Gross: 5.950</div>
<div class="t xc" style="left:1129px;top:722.5px;font-weight:bold;font-size:12.55px">Total Tare: 3.340</div>
<div class="t xc" style="left:1238px;top:722.5px;font-weight:bold;font-size:12.55px">Total Netto: 2.610</div>
<div class="t xc" style="left:808px;top:742.5px;font-style:italic;font-size:12.8px">Tanggal Cetak: 05 09 2025 22.48</div>
<div class="a" style="left:804px;top:408px;width:1010px;height:23px;border:3px solid #16935f;border-right:none"></div>
</div></div>
<div class="a" style="left:1805px;top:409px;width:17px;height:1px;background:#d8d8d8"></div>
<div class="a" style="left:1810px;top:416px;width:8px;height:2px;background:#a8a8a8"></div>
<svg class="a" style="left:1811px;top:427px" width="7" height="5" viewBox="0 0 7 5"><path d="M3.5 0L7 5H0Z" fill="#666"/></svg>
<div class="a" style="left:1810px;top:441px;width:8px;height:364px;background:#cdcdcd;border-radius:4px"></div>
<svg class="a" style="left:1811px;top:846px" width="7" height="5" viewBox="0 0 7 5"><path d="M0 0H7L3.5 5Z" fill="#666"/></svg>
<div class="a" style="left:774px;top:859px;width:1048px;height:1px;background:#dedede"></div>
<svg class="a" style="left:785px;top:865px" width="82" height="16" viewBox="785 865 82 16"><g fill="none" stroke="#9a9a9a" stroke-width="1.7" stroke-linejoin="miter"><path d="M790 868v9.8M797.6 869.2l-4.2 3.8 4.2 3.8"/><path d="M816.6 869.2l-4.5 3.8 4.5 3.8"/><path d="M835.3 869.2l4.5 3.8-4.5 3.8"/><path d="M854.4 869.2l4.4 3.8-4.4 3.8M862 868v9.8"/></g></svg>
<div class="a" style="left:875px;top:859px;width:126px;height:26px;background:#fff;border:1px solid #dcdcdc;border-top:none;border-radius:0 0 7px 7px"></div>
<div class="t" style="left:888px;top:867px;font-size:12px;font-weight:bold;letter-spacing:-0.25px;color:#127a56">Laporan Customer</div>
<svg class="a" style="left:1007px;top:869px" width="11" height="11" viewBox="0 0 11 11"><path d="M5.5 0v11M0 5.5h11" stroke="#222" stroke-width="1.8"/></svg>
<div class="a" style="left:1387px;top:868px;width:1px;height:8px;background:#aaa"></div>
<svg class="a" style="left:1401px;top:869px" width="6" height="7" viewBox="0 0 6 7"><path d="M6 0V7L0 3.5Z" fill="#666"/></svg>
<div class="a" style="left:1416px;top:869px;width:245px;height:8px;background:#cdcdcd;border-radius:4px"></div>
<svg class="a" style="left:1783px;top:869px" width="6" height="7" viewBox="0 0 6 7"><path d="M0 0V7L6 3.5Z" fill="#666"/></svg>
<div class="a" style="left:1802px;top:868px;width:1px;height:8px;background:#aaa"></div>
<div class="a" style="left:774px;top:886px;width:1048px;height:1px;background:#dedede"></div>
<svg class="a" style="left:789px;top:889px" width="84" height="18" viewBox="789 889 84 18">
<path d="M795 893.5v-2h9.5v10.8h-1.5" fill="none" stroke="#bdbdbd" stroke-width="1"/>
<rect x="792.6" y="893.8" width="10" height="10.6" rx="0.8" fill="#eee" stroke="#222" stroke-width="1.1"/><path d="M797.4 896.3v3.2h2.6" fill="none" stroke="#222" stroke-width="1.1"/>
<g fill="none" stroke="#222" stroke-width="1"><path d="M823.3 892l1 4.3 1-4.3"/><path d="M826.5 892v4.3h1.4a1 1 0 0 0 0-2.2h-1.4h1.2a1 1 0 0 0 0-2.1h-1.2"/><path d="M829.8 892h3M831.3 892v4.3"/><path d="M832.8 892h2.8a1.3 1.3 0 0 1 0 2.6h-2.6v8.3"/><path d="M825.2 898.2v1.5M824.3 900h5v3.8h-4a1 1 0 0 1-1-1Z M829.3 903.8h3.5"/></g>
<g fill="none" stroke="#b5b5b5" stroke-width="1"><path d="M867.5 894.5v-2h-11v11.3h5M862.5 897.5h6M862.5 900.5h6M862.5 903.5h6"/></g>
</svg>
<div class="t" style="left:886px;top:892px;font-size:12px;color:#a0a0a0">Rata-rata=0</div>
<div class="t" style="left:962px;top:892px;font-size:12px;color:#a0a0a0">Hitung=1</div>
<div class="t" style="left:1026px;top:892px;font-size:12px;color:#a0a0a0">Jumlah=0</div>
<svg class="a" style="left:1270px;top:888px" width="545" height="20" viewBox="1270 888 545 20"><g fill="none" stroke="#aaa" stroke-width="1.1">
<path d="M1274.5 891.5h15v5.5M1274.5 891.5v13.5h7M1274.5 896.5h15M1274.5 901h7M1280.5 891.5v13.5"/><path d="M1286 897.5l3.5 2v4l-3.5 2-3.5-2v-4Z"/><circle cx="1286" cy="901.5" r="1"/>
</g><g fill="none" stroke="#333" stroke-width="1.3">
<rect x="1314.2" y="895.2" width="4.6" height="4.6"/><path d="M1314.5 894.2v-1.6a0.8 0.8 0 0 1 0.8-0.8h2.4a0.8 0.8 0 0 1 0.8 0.8v1.6M1314.5 900.8v1.6a0.8 0.8 0 0 0 0.8 0.8h2.4a0.8 0.8 0 0 0 0.8-0.8v-1.6M1313.2 895.5h-1.6a0.8 0.8 0 0 0-0.8 0.8v2.4a0.8 0.8 0 0 0 0.8 0.8h1.6M1319.8 895.5h1.6a0.8 0.8 0 0 1 0.8 0.8v2.4a0.8 0.8 0 0 1-0.8 0.8h-1.6"/><path d="M1329.5 897l2.5 2.5 2.5-2.5" stroke-width="1.5"/>
</g><g fill="none" stroke="#aaa" stroke-width="1.1"><path d="M1368 895v-3.5h10v14h-10v-3M1365 897.5h7M1369.5 895l2.5 2.5-2.5 2.5M1368 902.5h10M1373 903.5v0.5"/></g>
<rect x="1391.5" y="888" width="23" height="22" rx="3" fill="#dcdcdc"/>
<g fill="none" stroke="#333" stroke-width="1.1">
<rect x="1397.5" y="892.5" width="12" height="11"/><path d="M1397.5 895.5h12M1401.5 892.5v11"/>
<rect x="1429.5" y="892.5" width="12" height="11"/><path d="M1435.5 892.5v11"/>
<path d="M1461.5 892.5h9v7h-9Z M1473.8 892.5v11h-12.3v-2"/>
<path d="M1494 898c2-3.5 5-5 7.5-5s5.5 1.5 7.5 5c-2 3.5-5 5-7.5 5s-5.5-1.5-7.5-5Z"/><circle cx="1501.5" cy="898" r="2.2"/>
<path d="M1514 897l2.5 2.5 2.5-2.5M1590 897l2.5 2.5 2.5-2.5"/>
<path d="M1791.5 896v-4h4M1805 896v-4h-4M1791.5 900v4h4M1805 900v4h-4M1797 898l-4.5 4.5M1799.5 898l4.5-4.5" stroke-width="1.2"/>
</g>
<path d="M1614 898.5h12" stroke="#222" stroke-width="2"/>
<path d="M1640 898.5h54" stroke="#2a62de" stroke-width="1.6"/><path d="M1694 898.5h52" stroke="#c8c8c8" stroke-width="1.2"/>
<circle cx="1693.5" cy="898.5" r="4" fill="#fff" stroke="#bbb" stroke-width="1"/><circle cx="1693.5" cy="898.5" r="1.8" fill="#888"/>
<path d="M1760 898.5h11M1765.5 893v11" stroke="#222" stroke-width="1.8"/>
</svg>
<div class="t" style="left:1551px;top:892px;font-size:12px;color:#333">100%</div>
</div></div>
</body></html>
